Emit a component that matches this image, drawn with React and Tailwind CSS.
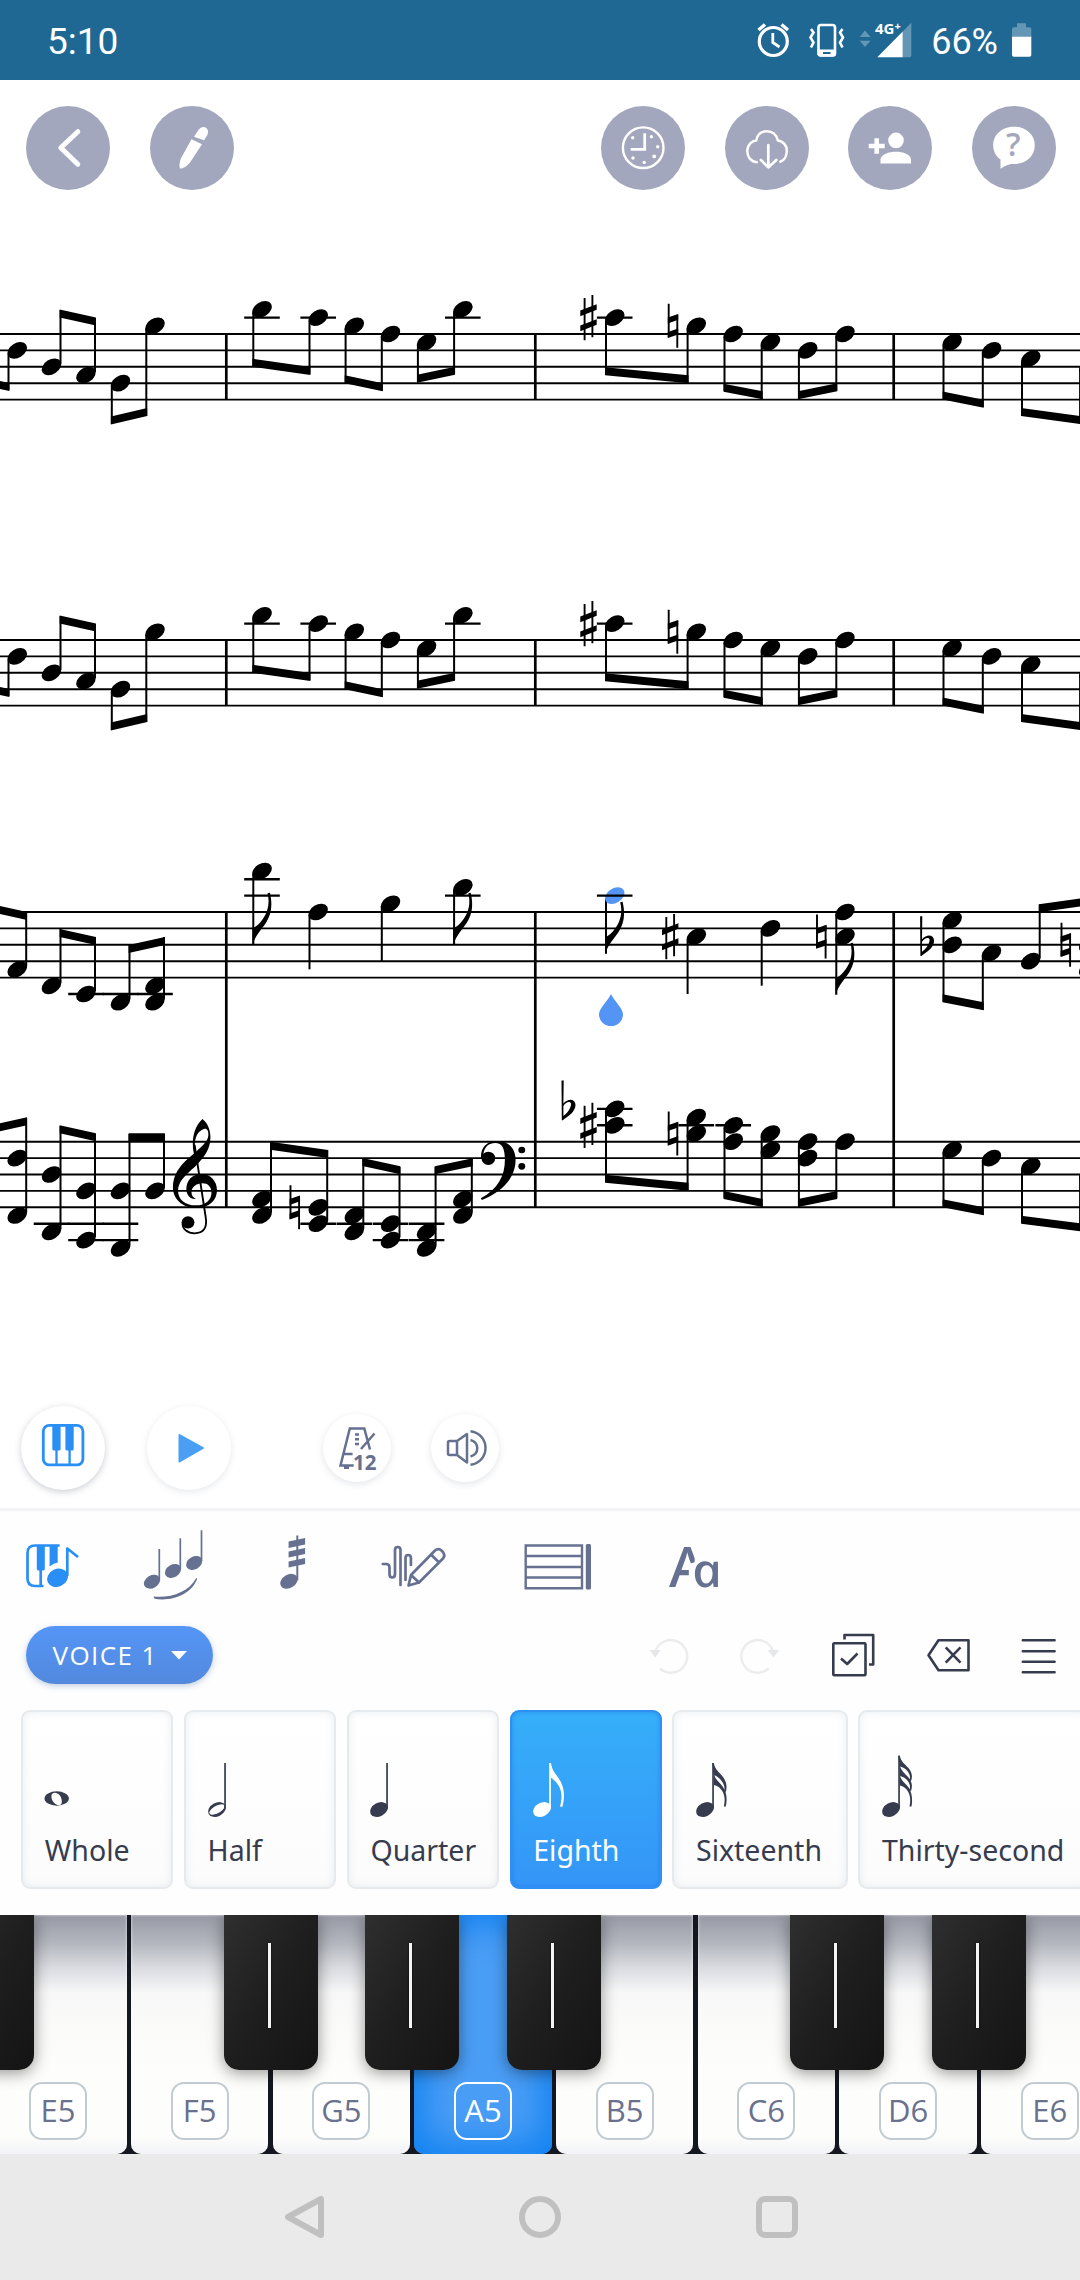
import React from "react";

/* ---------- score engraving ---------- */

const STEP = 8.2;
const STAVES = { a: 334, b: 640, c: 912, d: 1141.7 };
const at = (top, step) => top + step * STEP;

function Head({ x, y, fill = "#000" }) {
  return <ellipse cx={x} cy={y} rx="10.6" ry="7.3" fill={fill} transform={`rotate(-32 ${x} ${y})`} />;
}

function Ledger({ from, to, y }) {
  return <line x1={from} x2={to} y1={y} y2={y} stroke="#000" strokeWidth="2.4" />;
}

/* n: [x, steps[], stemDirection, stemEnd, ledgerSteps[]] */
function Note({ top, n, flag, fill }) {
  const [x, steps, dir, end, ledgers = []] = n;
  const sx = dir === "d" ? x - 8.7 : x + 9;
  const ys = steps.map((s) => at(top, s));
  const start = dir === "d" ? Math.min(...ys) + 3 : Math.max(...ys) - 3;
  return (
    <g>
      {dir && <line x1={sx} x2={sx} y1={start} y2={end} stroke="#000" strokeWidth="2" />}
      {ys.map((y) => (
        <Head key={y} x={x} y={y} fill={fill} />
      ))}
      {ledgers.map((s) => (
        <Ledger key={s} from={x - 17.8} to={x + 17.8} y={at(top, s)} />
      ))}
      {flag && (
        <path
          transform={`translate(${sx - 0.8} ${end})`}
          d="M0 .6C3-10 9-15 13.5-22C18.5-30 20.5-39 17.4-52L15-51.5C17.5-42 15.5-33 10.5-26C6.5-20.5 3-17.5 0-16.5Z"
        />
      )}
    </g>
  );
}

/* Beam given by the outer edge at both stems; t is the thickness, signed toward the heads. */
function Beam({ b }) {
  const [x1, y1, x2, y2, t] = b;
  return <path d={`M${x1 - 0.9} ${y1}L${x2 + 0.9} ${y2}V${y2 + t}L${x1 - 0.9} ${y1 + t}Z`} />;
}

function Sharp({ x, y }) {
  return (
    <g transform={`translate(${x} ${y})`}>
      <path d="M-3.9-19.5V22.7M3.9-22.5V19.7" stroke="#000" strokeWidth="1.9" fill="none" />
      <path d="M-8.2-7L8.2-13.4V-7.8L-8.2-1.4ZM-8.2 8L8.2 1.6V7.2L-8.2 13.6Z" />
    </g>
  );
}

function Natural({ x, y }) {
  return (
    <g transform={`translate(${x} ${y})`}>
      <path d="M-4.3-22V11.5M4.3-11V22" stroke="#000" strokeWidth="1.9" fill="none" />
      <path d="M-5.2-8.2L5.2-11.8V-6L-5.2-2.4ZM-5.2 6.2L5.2 2.6V8.6L-5.2 12.2Z" />
    </g>
  );
}

function Flat({ x, y }) {
  return (
    <g transform={`translate(${x} ${y})`}>
      <path fillRule="evenodd" d="M-6.9-28.5H-4.7L-5-5.5C-1.5-9.5 3-10.3 5.5-8C8.5-5 7 .5 3 4.5C0 7.5-3.5 9-5.6 11.3H-6.6ZM-5-3L-5 7C-1 4.5 3-1.5 2.6-5.2C2-8-2.5-7-5-3Z" />
    </g>
  );
}

const UPPER_NOTES = [
  [17.2, [2], "d", 390],
  [51.5, [4], "u", 310],
  [86, [5], "u", 318],
  [120.5, [6], "d", 424],
  [155, [-1], "d", 416],
  [262, [-3], "d", 366, [-2]],
  [318.2, [-2], "d", 374, [-2]],
  [354.3, [-1], "d", 383],
  [390.5, [0], "d", 391],
  [426.6, [1], "d", 382],
  [462.8, [-3], "d", 374, [-2]],
  [614.7, [-2], "d", 375, [-2]],
  [696.3, [-1], "d", 383],
  [733.2, [0], "d", 391],
  [770.4, [1], "d", 399],
  [807.6, [2], "d", 399],
  [845, [0], "d", 391],
  [952.2, [1], "d", 399],
  [991.5, [2], "d", 407],
  [1030.7, [3], "d", 416],
  [1088.8, [4], "d", 424],
];
const UPPER_BEAMS = [
  [-26, 383, 8.5, 391, -8],
  [60.6, 309.5, 95, 317.5, 8],
  [111.8, 424.5, 146.3, 416, -8],
  [253.3, 366.7, 309.5, 375, -8],
  [345.6, 383.2, 381.8, 391.3, -8],
  [417.9, 382.8, 454.1, 374.8, -8],
  [606, 375.2, 687.6, 383.3, -8],
  [724.5, 391.7, 761.7, 399.3, -8],
  [798.9, 399.3, 836.3, 391.3, -8],
  [943.5, 399.5, 982.8, 407.7, -8],
  [1022, 416, 1080, 424, -8],
];

function UpperStaff({ dy }) {
  return (
    <g transform={`translate(0 ${dy})`}>
      <StaffLines top={STAVES.a} />
      {[226.3, 535.3, 893.7].map((x) => (
        <line key={x} x1={x} x2={x} y1={STAVES.a} y2={STAVES.a + 65.6} stroke="#000" strokeWidth="2.7" />
      ))}
      {UPPER_NOTES.map((n) => (
        <Note key={n[0]} top={STAVES.a} n={n} />
      ))}
      {UPPER_BEAMS.map((b) => (
        <Beam key={b[0]} b={b} />
      ))}
      <Sharp x={588.5} y={317.6} />
      <Natural x={673} y={325.8} />
    </g>
  );
}

function StaffLines({ top }) {
  return [0, 2, 4, 6, 8].map((s) => (
    <line key={s} x1="0" x2="1080" y1={at(top, s)} y2={at(top, s)} stroke="#000" strokeWidth="1.9" />
  ));
}

const C_NOTES = [
  [17.2, [7], "u", 912],
  [51.5, [9], "u", 929],
  [86, [10], "u", 937, [10]],
  [120.5, [11], "u", 945, [10]],
  [155, [9, 11], "u", 937, [10]],
  [318.2, [0], "d", 969.3],
  [390.5, [-1], "d", 961],
  [696.3, [3], "d", 994],
  [770.4, [2], "d", 985.7],
  [952.2, [1, 4], "d", 1002],
  [991.5, [5], "d", 1010],
  [1030.7, [6], "u", 904.5],
  [1088.8, [4, 7], "", 0],
];
const C_FLAGGED = [
  [262, [-5], "d", 944.7, [-4, -2]],
  [462.8, [-3], "d", 944.7, [-2]],
  [845, [0, 3], "d", 994.7],
];
const D_NOTES = [
  [17.2, [2, 9], "u", 1118],
  [51.5, [4, 11], "u", 1126, [10]],
  [86, [6, 12], "u", 1134, [10, 12]],
  [120.5, [6, 13], "u", 1134, [10, 12]],
  [155, [6], "u", 1134],
  [262, [7, 9], "u", 1142],
  [318.2, [8, 10], "u", 1150, [10]],
  [354.3, [9, 11], "u", 1158, [10]],
  [390.5, [10, 12], "u", 1167, [10, 12]],
  [426.6, [11, 13], "u", 1167, [10, 12]],
  [462.8, [7, 9], "u", 1158],
  [614.7, [-4, -2], "d", 1182, [-4, -2]],
  [696.3, [-3, -1], "d", 1190, [-2]],
  [733.2, [-2, 0], "d", 1198, [-2]],
  [770.4, [-1, 1], "d", 1207],
  [807.6, [0, 2], "d", 1207],
  [845, [0], "d", 1198],
  [952.2, [1], "d", 1207],
  [991.5, [2], "d", 1215],
  [1030.7, [3], "d", 1223],
  [1088.8, [4], "d", 1231],
];
const GRAND_BEAMS = [
  [-26, 900, 26.1, 912, 8],
  [60.6, 929, 95, 937, 8],
  [129.5, 945, 164, 937, 8],
  [943.5, 1002.3, 982.8, 1010.3, -8],
  [1039.8, 904.2, 1110, 894, 8],
  [-26, 1129, 26.1, 1117.3, 8],
  [60.6, 1125.3, 95, 1133.3, 8],
  [129.5, 1133.3, 164, 1133.3, 8.3],
  [271, 1141.7, 327.2, 1150, 8],
  [363.3, 1158, 399.5, 1166.3, 8],
  [435.6, 1166.3, 471.8, 1158.3, 8],
  [606, 1182.7, 687.6, 1190.7, -8],
  [724.5, 1199, 761.7, 1207, -8],
  [798.9, 1207, 836.3, 1199, -8],
  [943.5, 1207.2, 982.8, 1215.3, -8],
  [1022, 1223.7, 1080, 1231.3, -8],
];

function Score() {
  return (
    <svg className="block h-[1158px] w-[1080px]" viewBox="0 212 1080 1158" fill="#000">
      <UpperStaff dy={0} />
      <UpperStaff dy={306} />
      <StaffLines top={STAVES.c} />
      <StaffLines top={STAVES.d} />
      {[226.3, 535.3, 893.7].map((x) => (
        <line key={x} x1={x} x2={x} y1="911" y2="1208" stroke="#000" strokeWidth="2.7" />
      ))}
      {C_NOTES.map((n) => (
        <Note key={n[0]} top={STAVES.c} n={n} />
      ))}
      {C_FLAGGED.map((n) => (
        <Note key={n[0]} top={STAVES.c} n={n} flag />
      ))}
      <Note top={STAVES.c} n={[614.7, [-2], "d", 953.7, [-2]]} flag fill="#5494f5" />
      {D_NOTES.map((n) => (
        <Note key={n[0]} top={STAVES.d} n={n} />
      ))}
      {GRAND_BEAMS.map((b) => (
        <Beam key={b.join()} b={b} />
      ))}
      <Sharp x={670.2} y={936.6} />
      <Natural x={821.3} y={936.6} />
      <Flat x={927} y={944.8} />
      <Natural x={1065.8} y={944.8} />
      <Natural x={294.8} y={1207.3} />
      <Flat x={568.4} y={1108.9} />
      <Sharp x={588.5} y={1125.3} />
      <Natural x={673} y={1133.5} />
      {/* treble and bass clefs */}
      <g transform="matrix(.3444 0 0 .3333 0 840)">
        <path d="M588 837C603 849 611 870 611 892C611 925 596 950 566 980C535 1008 517 1026 517 1052C517 1078 537 1096 568 1096C598 1096 614 1079 614 1058C614 1040 603 1030 588 1030C569 1030 556 1043 556 1056C556 1067 561 1073 569 1077C552 1079 541 1064 541 1047C541 1022 558 1002 585 1002C612 1002 630 1024 630 1050C630 1082 608 1103 570 1104C528 1104 502 1076 502 1042C502 1003 524 975 548 954C582 924 605 905 605 885C606 872 600 865 593 867C575 872 564 892 566 920L569 940L564 945C557 915 556 868 588 837Z" />
        <path d="M565 915L597 1130C603 1165 590 1180 565 1180C545 1180 530 1168 530 1150" fill="none" stroke="#000" strokeWidth="5.5" />
        <circle cx="546" cy="1147" r="18.5" />
        <path d="M1397 955C1394 925 1412 903 1442 903C1475 903 1497 922 1497 960C1497 1010 1462 1055 1399 1080L1396 1075C1445 1048 1466 1008 1466 960C1466 925 1458 909 1438 909C1420 909 1406 920 1403 945Z" />
        <circle cx="1418" cy="955" r="20" />
        <circle cx="1515" cy="930" r="10" />
        <circle cx="1515" cy="979" r="10" />
      </g>
      <path d="M611 994C614 1001 623 1008 623 1014.500A12 11.500 0 0 1 599 1014.500C599 1008 608 1001 611 994Z" fill="#5494f5" />
    </svg>
  );
}

/* ---------- status bar and header ---------- */

function StatusBar() {
  return (
    <div className="flex h-20 items-center justify-between bg-[#206894] pl-[47px] pr-[48px] font-[Roboto,sans-serif] text-[37px] leading-none text-white">
      <span className="pt-[3px]">5:10</span>
      <div className="flex items-center">
        <svg className="h-[64px] w-[160px]" viewBox="753 8.500 160 64" fill="none" stroke="#fff">
          <circle cx="773.300" cy="42" r="14" strokeWidth="3.200" />
          <path d="M772.800 33.500V43L779.500 47.500" strokeWidth="2.800" />
          <path d="M758.500 30.500L765 25M788 30.500L781.500 25" strokeWidth="3.400" />
          <rect x="818.500" y="25.500" width="16.500" height="30.500" rx="2.500" strokeWidth="2.600" />
          <path d="M817.500 50H836V54.500Q836 57 833.500 57H820Q817.500 57 817.500 54.500Z" fill="#fff" stroke="none" />
          <path d="M823 53.500H830.500" stroke="#206894" strokeWidth="2" />
          <path d="M811 29.500L813.500 33L810.500 38L813.500 43L811 48M842.500 29.500L840 33L843 38L840 43L842.500 48" strokeWidth="2.600" />
          <path d="M859.700 37.500L865 31L870.600 37.500ZM859.700 41.300L865 47.500L870.600 41.300Z" fill="#6496b5" stroke="none" />
          <path d="M902.700 32L911.300 23.300V56Q911.300 57.700 909.500 57.700H902.700Z" fill="#6496b5" stroke="none" />
          <path d="M877.300 57.700L902.700 32V57.700Z" fill="#fff" stroke="none" />
          <text x="875" y="34" fill="#fff" stroke="#206894" strokeWidth="2" paintOrder="stroke" className="font-['Noto_Sans',sans-serif] text-[15px] font-bold">
            4G<tspan dy="-4" fontSize="11">+</tspan>
          </text>
        </svg>
        <span className="ml-[18px] pt-[3px] text-[36px]">66%</span>
        <svg className="ml-[14px] h-[34px] w-[20px]" viewBox="1012 23 20 34">
          <path d="M1012 37V29Q1012 27.300 1014 27.300H1017V23.300H1026V27.300H1029.500Q1031.300 27.300 1031.300 29V37Z" fill="#6496b5" />
          <path d="M1012 36.700H1031.300V55Q1031.300 56.700 1029.500 56.700H1014Q1012 56.700 1012 55Z" fill="#fff" />
        </svg>
      </div>
    </div>
  );
}

function RoundButton({ x, children }) {
  return (
    <button className="size-[84px] rounded-full bg-[#a3a7bd]">
      <svg className="size-[84px]" viewBox={`${x - 42} 106.300 84 84`} fill="none" stroke="#fff" strokeLinecap="round" strokeLinejoin="round">
        {children}
      </svg>
    </button>
  );
}

function Header() {
  return (
    <div className="flex h-[132px] items-start justify-between pl-[26px] pr-[24.500px] pt-[26px]">
      <div className="flex gap-[39.500px]">
        <RoundButton x={68}>
          <path d="M77.800 132L60.800 148L77.800 164.500" strokeWidth="5" />
        </RoundButton>
        <RoundButton x={191.500}>
          <path d="M193.500 137L198.500 129.500Q202 126 205.500 128Q208.500 130 207 135L203.500 140.500Z" fill="#fff" stroke="none" />
          <path d="M191 139.500L201.500 144.500L189 163.500Q183 169.500 179.500 168.800Q178 165 180.500 158.500Z" fill="#fff" stroke="none" />
        </RoundButton>
      </div>
      <div className="flex gap-[39.500px]">
        <RoundButton x={643.300}>
          <circle cx="643.500" cy="148" r="20.300" strokeWidth="2.400" />
          <path d="M645 133.500V149.700H631" strokeWidth="2.800" strokeLinecap="butt" strokeLinejoin="miter" />
          <g fill="#fff" stroke="none">
            <circle cx="633" cy="138" r="1.700" />
            <circle cx="651.700" cy="137" r="1.700" />
            <circle cx="658" cy="147" r="1.700" />
            <circle cx="654.500" cy="156.700" r="1.900" />
            <circle cx="644.500" cy="162.700" r="1.700" />
            <circle cx="633.300" cy="158.300" r="1.700" />
          </g>
        </RoundButton>
        <RoundButton x={766.700}>
          <path d="M756.500 162.600C750 162 746.700 156.500 747 150.500C747.500 145 751.500 141 756 140.700C757 134.500 761 131.500 766.700 131.500C772 131.500 776.500 135 777.500 140.700C783 141.300 786.500 146 786.500 151C786.500 157 783.500 161 780 162" strokeWidth="2.500" />
          <path d="M768 145.500V167.500M760.500 160.200L768 167.700L776 160.200" strokeWidth="2.700" />
        </RoundButton>
        <RoundButton x={890}>
          <circle cx="896" cy="140.700" r="7.800" fill="#fff" stroke="none" />
          <path d="M880.500 163.700V159.500C881 154.500 889 152 896 152C903 152 910.500 154.500 911 159.500V163.700Z" fill="#fff" stroke="none" />
          <path d="M876.700 138.500V154M868.700 146.300H884.700" strokeWidth="4.600" strokeLinecap="butt" />
        </RoundButton>
        <RoundButton x={1013.500}>
          <path d="M1013.500 127C1025 127 1034.300 134.500 1034.300 145.500C1034.300 156.500 1025 164.300 1013.500 164.300C1010 164.300 1007 164.500 1000 169V159.800C995 156.500 992.700 151 992.700 145.500C992.700 134.500 1002 127 1013.500 127Z" fill="#fff" stroke="none" />
          <text x="1012.800" y="156.800" textAnchor="middle" fill="#a3a7bd" stroke="none" className="font-['Open_Sans',sans-serif] text-[32px] font-semibold">?</text>
        </RoundButton>
      </div>
    </div>
  );
}

/* ---------- playback row ---------- */

function Playback() {
  return (
    <div className="flex h-[141px] items-center border-b-[3px] border-[#f4f4f6] pl-[21px] pt-[17px]">
      <button className="size-[84px] rounded-full bg-white shadow-[0_2px_7px_rgba(60,70,100,0.26)]">
        <svg className="size-[84px]" viewBox="21 1406 84 84" fill="none" stroke="#2a8ff5" strokeWidth="2.800">
          <rect x="43.300" y="1425.300" width="39.600" height="39.600" rx="6" />
          <path d="M52.300 1425H60.600V1449Q60.600 1450.500 59 1450.500H54Q52.300 1450.500 52.300 1449ZM65.400 1425H73.700V1449Q73.700 1450.500 72 1450.500H67Q65.400 1450.500 65.400 1449Z" fill="#2a8ff5" stroke="none" />
          <path d="M56.500 1450V1465M69.600 1450V1465" strokeWidth="2.300" />
        </svg>
      </button>
      <button className="ml-[42px] size-[84px] rounded-full bg-white shadow-[0_2px_7px_rgba(60,70,100,0.12)]">
        <svg className="size-[84px]" viewBox="147 1405.500 84 84">
          <path d="M179.500 1434.500L203 1447.500L179.500 1461Z" fill="#4a9ff5" stroke="#4a9ff5" strokeWidth="2" strokeLinejoin="round" />
        </svg>
      </button>
      <button className="ml-[92px] size-[68px] rounded-full bg-white shadow-[0_2px_7px_rgba(60,70,100,0.14)]">
        <svg className="size-[68px]" viewBox="323 1413.500 68 68" fill="none" stroke="#667191" strokeWidth="2.500">
          <path d="M353.700 1465H340.500L349.800 1428H364.300L370 1449M374.500 1433L361 1448.500M343.500 1453.500H352.600M344 1467.300H349M355 1434H359M355 1438.700H359M355 1443.500H359" />
          <text x="353" y="1469.500" fill="#667191" stroke="none" className="font-['Noto_Sans',sans-serif] text-[20.5px] font-bold">12</text>
        </svg>
      </button>
      <button className="ml-[39.500px] size-[68px] rounded-full bg-white shadow-[0_2px_7px_rgba(60,70,100,0.14)]">
        <svg className="size-[68px]" viewBox="430.500 1413.500 68 68" fill="none" stroke="#667191" strokeWidth="2.500" strokeLinejoin="round">
          <path d="M456.500 1440.500H449Q447.500 1440.500 447.500 1442V1453Q447.500 1454.500 449 1454.500H456.500ZM456.500 1440.500L466.500 1433.500V1462L456.500 1454.500" />
          <path d="M470 1439.500C479 1442 479 1453.500 470 1456M470 1430.700C490 1433.500 490 1461.500 470 1464.300" />
        </svg>
      </button>
    </div>
  );
}

/* ---------- editing toolbars ---------- */

const SLATE = "#667191";

function ToolTabs() {
  return (
    <div className="flex h-[90px] items-center pl-[24px]">
      <svg className="h-[80px] w-[56px]" viewBox="24 1525 56 80" fill="none" stroke="#2a8ff5" strokeWidth="2.700">
        <path d="M59.600 1545.500H35Q27.500 1545.500 27.500 1553V1578.500Q27.500 1586 35 1586H43.500" />
        <path d="M36.800 1545H44.800V1569Q44.800 1570.500 43 1570.500H38.500Q36.800 1570.500 36.800 1569ZM49.600 1545H57.700V1562.500Q53 1563.500 49.600 1566.500Z" fill="#2a8ff5" stroke="none" />
        <path d="M40.700 1570V1586" />
        <ellipse cx="57.500" cy="1577.800" rx="10.800" ry="8.800" transform="rotate(-25 57.500 1577.800)" fill="#2a8ff5" stroke="none" />
        <path d="M67.300 1576V1548.500L78 1557" strokeLinejoin="round" />
      </svg>
      <svg className="ml-[62px] h-[80px] w-[64px]" viewBox="142 1525 64 80" fill={SLATE}>
        {[[152, 1581.700, 1549], [173, 1571, 1538.300], [194.200, 1563, 1530.300]].map(([x, y, t]) => (
          <g key={x}>
            <ellipse cx={x} cy={y} rx="8.600" ry="6.300" transform={`rotate(-30 ${x} ${y})`} />
            <path d={`M${x + 7.300} ${y - 2}V${t}`} stroke={SLATE} strokeWidth="1.700" />
          </g>
        ))}
        <path d="M153.500 1596.500C170 1598.500 189 1592 196.300 1578L197.200 1578.800C192 1594 172 1602 154.500 1598.800Z" />
      </svg>
      <svg className="ml-[72px] h-[80px] w-[30px]" viewBox="278 1525 30 80" fill={SLATE}>
        <ellipse cx="289" cy="1581.300" rx="9.300" ry="6.700" transform="rotate(-30 289 1581.300)" />
        <path d="M297.300 1580V1535.500" stroke={SLATE} strokeWidth="2" />
        <path d="M288.600 1541.500L305.100 1538V1544.500L288.600 1548ZM288.600 1551.500L305.100 1548V1554L288.600 1557.500ZM288.600 1561.500L305.100 1558V1564L288.600 1567.500Z" />
      </svg>
      <svg className="ml-[72px] h-[80px] w-[68px]" viewBox="380 1525 68 80" fill="none" stroke={SLATE} strokeWidth="2.700" strokeLinecap="round" strokeLinejoin="round">
        <path d="M382.800 1564H386Q389.500 1564 389.500 1567.500V1574Q389.500 1577.500 392.200 1577.500Q395 1577.500 395 1574V1550Q395 1547 397.700 1547Q400.500 1547 400.500 1550V1585" />
        <path d="M405.500 1580V1558Q405.500 1555 408.200 1555Q410.900 1555 410.900 1558V1565" />
        <path d="M408.500 1585.500L411 1575L435 1550.500Q438.500 1547.500 442 1551Q446 1555 443 1558.500L419 1582.500ZM411 1575L419 1582.500M431 1554.500L439 1562.500" />
      </svg>
      <svg className="ml-[74px] h-[80px] w-[72px]" viewBox="522 1525 72 80" fill="none" stroke={SLATE} strokeWidth="2.400">
        <path d="M525.700 1545.500H582V1588.300H525.700ZM525.700 1556H582M525.700 1567H582M525.700 1577.500H582" />
        <rect x="585.800" y="1544" width="5.200" height="45.500" rx="1.500" fill={SLATE} stroke="none" />
      </svg>
      <div className="ml-[75px] flex items-baseline font-['Noto_Sans',sans-serif] font-medium leading-none text-[#667191]">
        <span className="text-[56px] [clip-path:polygon(0_0,70%_0,70%_45%,54%_48%,54%_100%,0_100%)]">A</span>
        <span className="-ml-[14.5px] inline-block origin-left skew-x-[12deg] scale-x-[1.1] text-[47px] italic">a</span>
      </div>
    </div>
  );
}

const INK = "#363c4e";

function EditRow() {
  return (
    <div className="flex h-[110px] items-center pl-[26px]">
      <button className="flex h-[58px] w-[187px] items-center rounded-full bg-linear-to-b from-[#5595f7] to-[#5289dd] pl-[26.500px] pt-[1.500px] font-['Open_Sans',sans-serif] text-[26px] tracking-[1.4px] text-white shadow-[0_2px_6px_rgba(60,90,160,0.3)]">
        VOICE 1
        <svg className="ml-[13.500px] h-[9px] w-[16px]" viewBox="0 0 16 9">
          <path d="M0 0H16L8 8.500Z" fill="#fff" />
        </svg>
      </button>
      <svg className="ml-[435px] h-[50px] w-[42px]" viewBox="648 1630 42 50" fill="none" stroke="#ebecee" strokeWidth="2.400">
        <path d="M655.500 1651A16.300 16.300 0 1 1 660 1668.500" />
        <path d="M649.500 1650H660.800L655.200 1657.500Z" fill="#e6e7ea" stroke="none" />
      </svg>
      <svg className="ml-[50px] h-[50px] w-[42px]" viewBox="740 1630 42 50" fill="none" stroke="#ebecee" strokeWidth="2.400">
        <path d="M773 1651A16.300 16.300 0 1 0 768.500 1668.500" />
        <path d="M767.600 1650H779.200L773.500 1657.500Z" fill="#e6e7ea" stroke="none" />
      </svg>
      <svg className="ml-[48px] h-[50px] w-[46px]" viewBox="830 1630 46 50" fill="none" stroke={INK} strokeWidth="2.600" strokeLinejoin="round">
        <rect x="833.300" y="1643.300" width="32.200" height="32" rx="1" />
        <path d="M844.500 1639.500V1635H873.200V1664.500H869M841 1658.500L847.200 1664L857.500 1653.500" />
      </svg>
      <svg className="ml-[49px] h-[50px] w-[46px]" viewBox="925 1630 46 50" fill="none" stroke={INK} strokeWidth="2.600" strokeLinejoin="round">
        <path d="M928.500 1655.200L938.500 1640.200H968.500V1670.200H938.500ZM945.700 1647.300L960.500 1662.700M960.500 1647.300L945.700 1662.700" />
      </svg>
      <svg className="ml-[50px] h-[50px] w-[36px]" viewBox="1021 1630 36 50" stroke={INK} strokeWidth="2.500" strokeLinecap="round">
        <path d="M1022.800 1640.300H1054.600M1022.800 1651.200H1054.600M1022.800 1661.800H1054.600M1022.800 1672.300H1054.600" />
      </svg>
    </div>
  );
}

const QHead = () => <ellipse cx="9" cy="53.500" rx="9.500" ry="6.700" transform="rotate(-28 9 53.500)" />;
const Stem = ({ top = 7 }) => <rect x="16.200" y={top} width="1.700" height={52 - top} />;

const DURATIONS = [
  {
    name: "Whole",
    width: "w-[152px]",
    icon: <path fillRule="evenodd" d="M-.5 42.500a12.200 7.200 0 1 0 24.400 0a12.200 7.200 0 1 0-24.400 0ZM6.500 39.500C7 35.500 12 36 14.500 39C17 42 18 48 15 49C10.500 50 5.800 44.500 6.500 39.500Z" />,
  },
  {
    name: "Half",
    width: "w-[152px]",
    icon: (
      <>
        <path fillRule="evenodd" transform="rotate(-28 9 53.500)" d="M-.5 53.500a9.500 6.700 0 1 0 19 0a9.500 6.700 0 1 0-19 0ZM.6 54a8.400 3.600 0 1 1 16.800-1a8.400 3.600 0 1 1-16.800 1Z" />
        <Stem />
      </>
    ),
  },
  { name: "Quarter", width: "w-[152px]", icon: <><QHead /><Stem /></> },
  {
    name: "Eighth",
    width: "w-[152px]",
    active: true,
    icon: (
      <>
        <QHead />
        <Stem />
        <path d="M16.200 7H18C19 14.500 22 17 25.500 22C32 31.500 32 41 29.300 51L27 50.500C29.500 41 29 34 24.500 28C21.500 24 19 22.500 17.800 21.500Z" />
      </>
    ),
  },
  {
    name: "Sixteenth",
    width: "w-[175.200px]",
    icon: (
      <>
        <QHead />
        <Stem />
        <path d="M16.200 7H17.800C19 14 23.500 16 27 21C31.500 27 31 33 29.500 36.500L28 35.500C29.500 31 27.500 26.500 24 23C21 20 19 19.500 17.800 19ZM17.800 17C19 24.500 23.500 25.500 27 31C31.500 38 31 45 29.800 50.500H27.800C29.500 43 28.500 38 25.500 34C22.500 30 20 29.500 17.800 29Z" />
      </>
    ),
  },
  {
    name: "Thirty-second",
    width: "w-[233px]",
    icon: (
      <>
        <QHead />
        <Stem top={0} />
        <path d="M16.200-.6H17.800C19 6 23 8 26.500 12C30.500 17 30.500 21 29 25L27.500 24C29 20 27 16.500 24 13.500C21 11 19 11 17.800 10.500ZM17.800 9C19 15 23 17.500 26.500 21.500C30.500 26.500 30.500 30.500 29 35L27.500 34C29 29.500 27 26 24 23C21 20.500 19 20.500 17.800 20ZM17.800 18.500C19 25.500 23.500 27 27 32C30.500 38 30.500 45 29.500 50.500H27.500C29 43 28 38 25 34C22.500 30.500 20 30 17.800 29.500Z" />
      </>
    ),
  },
];

function Durations() {
  return (
    <div className="flex h-[205px] gap-[10.800px] overflow-hidden pl-[21.300px]">
      {DURATIONS.map(({ name, icon, active, width }) => (
        <button
          key={name}
          className={
            "flex h-[179px] shrink-0 flex-col items-start justify-end rounded-[9px] border-[2.5px] pb-[19px] pl-[21.500px] font-['Noto_Sans',sans-serif] text-[28.5px] leading-[36px] whitespace-nowrap " +
            width +
            " " +
            (active
              ? "border-[#2f8ff3] bg-linear-to-b from-[#36aff9] to-[#3495f7] text-white shadow-[inset_0_0_4px_rgba(20,90,220,0.35)]"
              : "border-[#e7eaed] bg-linear-to-b from-white to-[#fcfcfc] text-[#363c4e] shadow-[inset_0_0_9px_rgba(80,100,140,0.12)]")
          }
        >
          <svg className="mb-[12px] h-[64px] w-[36px] overflow-visible" viewBox="0 0 36 64" fill="currentColor">
            {icon}
          </svg>
          {name}
        </button>
      ))}
    </div>
  );
}

/* ---------- piano ---------- */

const WHITE_KEYS = ["E5", "F5", "G5", "A5", "B5", "C6", "D6", "E6"];
const BLACK_KEYS = [-60, 223.8, 365.3, 507.2, 790.3, 932];

function Piano() {
  return (
    <div className="relative h-[239px] overflow-hidden bg-[#151720]">
      <div className="-ml-[10.7px] flex h-full gap-[4.5px]">
        {WHITE_KEYS.map((k) => {
          const on = k === "A5";
          return (
            <div
              key={k}
              className={
                "flex h-full w-[137.2px] shrink-0 items-end justify-center rounded-b-[10px] pb-[14px] " +
                (on
                  ? "bg-[#4a9df5] shadow-[inset_0_0_34px_10px_#1182f2]"
                  : "bg-[linear-gradient(to_bottom,#9698a3_0px,#b4b6bf_28px,#d8dadf_52px,#f8f8f8_78px,#fdfdfc_150px,#fdfdfc_222px,#f1f2f6_239px)] shadow-[inset_0_0_3px_rgba(255,255,255,0.8)]")
              }
            >
              <span
                className={
                  "flex size-[58px] items-center justify-center rounded-[13px] border-[2.5px] pb-[2px] font-['Open_Sans',sans-serif] text-[31px] leading-none " +
                  (on ? "border-white text-white" : "border-[#c2cbd2] bg-white text-[#69718e]")
                }
              >
                {k}
              </span>
            </div>
          );
        })}
      </div>
      {BLACK_KEYS.map((x) => (
        <div
          key={x}
          className="absolute top-0 flex h-[154.5px] w-[94px] justify-center rounded-b-[15px] bg-linear-to-br from-[#2f2f2f] via-[#1e1e1e] to-[#141414] pr-[3px] pt-[28px] shadow-[0_3px_16px_rgba(0,0,0,0.42)]"
          style={{ left: x }}
        >
          <div className="h-[85px] w-[3px] bg-[#f4f4f4] shadow-[0_0_2px_#000]" />
        </div>
      ))}
    </div>
  );
}

function NavBar() {
  return (
    <div className="flex h-[126px] items-center bg-[#eaeaea] pl-[283px]">
      <svg className="h-[44px] w-[44px]" viewBox="0 0 44 44" fill="none" stroke="#c0c0c0" strokeWidth="6" strokeLinejoin="round">
        <path d="M38 4V40L5 22Z" />
      </svg>
      <div className="ml-[192px] size-[42px] rounded-full border-[6px] border-[#c0c0c0]" />
      <div className="ml-[195px] size-[42px] rounded-[9px] border-[6px] border-[#c0c0c0]" />
    </div>
  );
}

export default function App() {
  return (
    <div className="h-[2280px] w-[1080px] overflow-hidden bg-white">
      <StatusBar />
      <Header />
      <Score />
      <Playback />
      <div className="flex h-[404px] flex-col bg-[#fefefe] pt-[9px]">
        <ToolTabs />
        <div className="h-[100px]">
          <div className="-mt-[10px]">
            <EditRow />
          </div>
        </div>
        <Durations />
      </div>
      <Piano />
      <NavBar />
    </div>
  );
}
